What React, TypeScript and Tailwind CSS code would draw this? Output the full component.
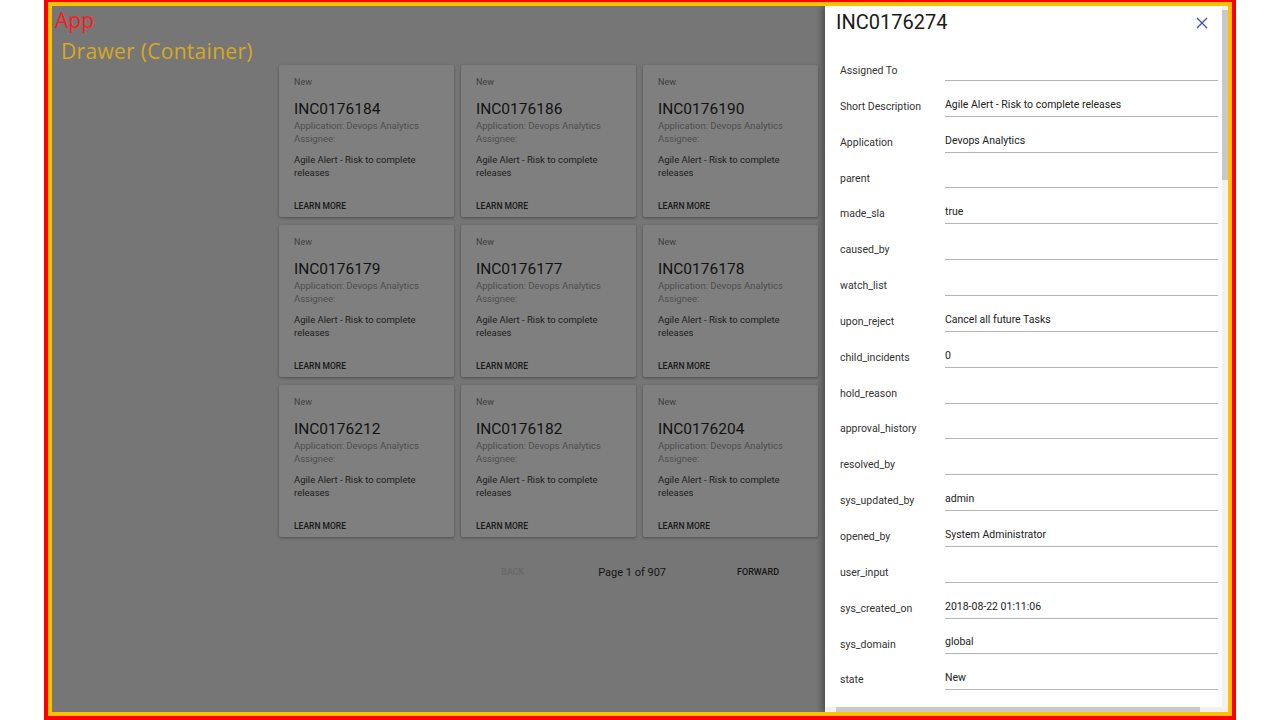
const CARDS = [
  'INC0176184',
  'INC0176186',
  'INC0176190',
  'INC0176179',
  'INC0176177',
  'INC0176178',
  'INC0176212',
  'INC0176182',
  'INC0176204',
];

const FIELDS: [string, string][] = [
  ['Assigned To', ''],
  ['Short Description', 'Agile Alert - Risk to complete releases'],
  ['Application', 'Devops Analytics'],
  ['parent', ''],
  ['made_sla', 'true'],
  ['caused_by', ''],
  ['watch_list', ''],
  ['upon_reject', 'Cancel all future Tasks'],
  ['child_incidents', '0'],
  ['hold_reason', ''],
  ['approval_history', ''],
  ['resolved_by', ''],
  ['sys_updated_by', 'admin'],
  ['opened_by', 'System Administrator'],
  ['user_input', ''],
  ['sys_created_on', '2018-08-22 01:11:06'],
  ['sys_domain', 'global'],
  ['state', 'New'],
];

function Card({ number }: { number: string }) {
  return (
    <div className="h-[152px] bg-[#7f7f7f] rounded-[2px] shadow-[0_1px_3px_rgba(0,0,0,0.35)] px-[15px] pt-[11px] flex flex-col">
      <p className="text-[9px] leading-[12px] text-[#3e3e3e]">New</p>
      <p className="mt-[11px] text-[15.5px] leading-[20px] text-[#121212]">{number}</p>
      <p className="text-[9.5px] leading-[13px] text-[#4e4e4e]">Application: Devops Analytics</p>
      <p className="text-[9.5px] leading-[13px] text-[#4e4e4e]">Assignee:</p>
      <p className="mt-[8px] text-[9.5px] leading-[13px] text-[#1c1c1c] w-[125px]">
        Agile Alert - Risk to complete releases
      </p>
      <p className="mt-auto mb-[5px] text-[8.5px] leading-[12px] font-medium text-[#181818]">
        LEARN MORE
      </p>
    </div>
  );
}

export default function App() {
  return (
    <div className="w-[1280px] h-[720px] bg-white pl-[44px] font-['Roboto',sans-serif]">
      {/* App frame */}
      <div className="w-[1192px] h-[720px] border-x-4 border-t-2 border-b-4 border-[#ff0000]">
        {/* Drawer container frame */}
        <div className="relative h-full border-4 border-[#ffc000] bg-[#767676] overflow-hidden">
          <div className="pl-[3px] font-['Open_Sans',sans-serif] text-[21px] leading-[28px] text-[#ff1a1a]">
            App
          </div>
          <div className="pl-[9px] mt-[3px] font-['Open_Sans',sans-serif] text-[21px] leading-[28px] tracking-[0.3px] text-[#d9a820]">
            Drawer (Container)
          </div>

          <div className="ml-[227px] mt-[0px] w-[539px] grid grid-cols-3 gap-x-[7px] gap-y-[8px]">
            {CARDS.map((c) => (
              <Card key={c} number={c} />
            ))}
          </div>

          <div className="ml-[227px] mt-[28px] flex items-center h-[16px]">
            <span className="ml-[222px] text-[9px] font-medium text-[#676767]">BACK</span>
            <span className="ml-[74px] text-[11px] text-[#151515]">Page 1 of 907</span>
            <span className="ml-[71px] text-[9px] font-medium text-[#151515]">FORWARD</span>
          </div>

          {/* Drawer */}
          <div className="absolute top-0 right-0 bottom-0 w-[403px] bg-white flex flex-col shadow-[-3px_0_6px_rgba(0,0,0,0.35)]">
            <div className="flex-1 flex min-h-0">
              <div className="flex-1 overflow-hidden">
                <div className="h-[47px] flex items-start justify-between pl-[11px] pr-[14px] pt-[4px]">
                  <span className="text-[20px] leading-[24px] text-[#1a1a1a]">INC0176274</span>
                  <svg className="mt-[7px]" width="12" height="12" viewBox="0 0 12 12" fill="none" stroke="#3f51b5" strokeWidth="1.4">
                    <path d="M1 1l10 10M11 1L1 11" />
                  </svg>
                </div>
                {FIELDS.map(([label, value]) => (
                  <div key={label} className="h-[35.85px] flex items-center pl-[15px] pr-[4px]">
                    <span className="w-[105px] shrink-0 text-[10.5px] text-[#333]">{label}</span>
                    <div className="flex-1 h-[20px] border-b border-[#b5b5b5] text-[10.5px] leading-[15px] text-[#222]">
                      {value}
                    </div>
                  </div>
                ))}
              </div>
              <div className="w-[6px] bg-[#f1f1f1] flex flex-col items-stretch">
                <div className="mt-[4px] h-[170px] bg-[#c8c8c8]" />
              </div>
            </div>
            <div className="h-[5px] bg-[#f1f1f1] flex">
              <div className="ml-[11px] w-[364px] bg-[#c8c8c8]" />
            </div>
          </div>
        </div>
      </div>
    </div>
  );
}
